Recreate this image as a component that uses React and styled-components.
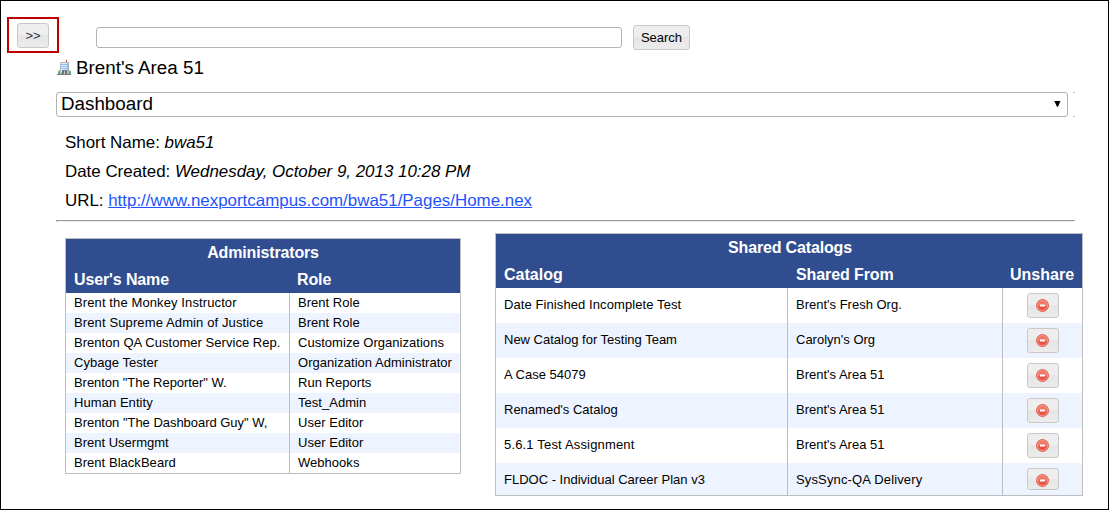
import React from "react";
import styled, { createGlobalStyle } from "styled-components";

const Global = createGlobalStyle`
  * { box-sizing: border-box; }
  body { margin: 0; background: #fff; color: #000; font-family: "Liberation Sans", Arial, sans-serif; }
`;

const Page = styled.main`
  width: 1109px;
  height: 510px;
  border: 1px solid #000;
  overflow: hidden;
  display: flex;
  flex-direction: column;
`;

const TopBar = styled.header`
  display: flex;
  align-items: flex-start;
  padding: 16px 0 0 6px;
  height: 52px;
  flex: none;
`;

const Highlight = styled.div`
  width: 52px;
  height: 36px;
  border: 2px solid #c00000;
  padding: 4px 8px;
  margin-right: 37px;
`;

const Button = styled.button`
  display: flex;
  align-items: center;
  justify-content: center;
  width: ${(p) => p.$width || 32}px;
  height: ${(p) => p.$height || 25}px;
  margin: ${(p) => p.$margin || "0"};
  padding: ${(p) => p.$padding || "0"};
  border: 1px solid #c8c8c8;
  border-radius: 3px;
  background: linear-gradient(#eeeeee 0 48%, #e5e5e5 50%, #ececec 100%);
  color: ${(p) => p.$color || "#000"};
  font: 13px "Liberation Sans", Arial, sans-serif;
`;

const SearchInput = styled.input`
  width: 526px;
  height: 21px;
  margin: 10px 11px 0 0;
  border: 1px solid #b4b4b4;
  border-radius: 3px;
  outline: none;
`;

const Title = styled.h1`
  display: flex;
  align-items: center;
  gap: 4px;
  height: 28px;
  margin: 1px 0 0 56px;
  font-size: 18.8px;
  font-weight: 400;
  line-height: 28px;
`;

const SelectRow = styled.div`
  display: flex;
  gap: 5px;
  height: 25px;
  margin: 10px 0 0 55px;
  flex: none;
`;

const Select = styled.div`
  display: flex;
  align-items: center;
  justify-content: space-between;
  width: 1012px;
  padding: 0 6px 1px 4px;
  border: 1px solid #b4b4b4;
  border-radius: 3px;
  font-size: 18.8px;
`;

const SelectEdge = styled.div`
  width: 2px;
  border: 1px solid #c4c4c4;
  border-width: 1px 0;
`;

const Details = styled.section`
  margin: 11px 0 0 64px;
  font-size: 16.92px;
  line-height: 29px;
  height: 87px;
  flex: none;
`;

const Detail = styled.div`
  white-space: nowrap;
`;

const Link = styled.a`
  color: #1e54fa;
  text-decoration: underline;
`;

const Divider = styled.hr`
  width: 1019px;
  height: 2px;
  margin: 5px 0 0 55px;
  border: 1px solid #999;
  border-right-color: #eee;
  border-bottom-color: #eee;
  flex: none;
`;

const Panels = styled.section`
  display: flex;
  align-items: flex-start;
  gap: 34px;
  padding: 11px 0 0 64px;
`;

const Table = styled.div`
  width: ${(p) => p.$width}px;
  margin-top: ${(p) => p.$top || 0}px;
  border: 1px solid #bcbec0;
  flex: none;
`;

const TableHead = styled.div`
  height: 54px;
  background: #304d8f;
  color: #fff;
  font-size: 16px;
  font-weight: 700;
  line-height: 27px;
`;

const Caption = styled.div`
  text-align: center;
  padding-left: ${(p) => p.$left || 0}px;
  letter-spacing: -0.15px;
`;

const Row = styled.div`
  display: grid;
  grid-template-columns: ${(p) => p.$columns};
  grid-template-rows: 100%;
  height: ${(p) => p.$height}px;
  line-height: ${(p) => p.$line || p.$height}px;
  background: ${(p) => (p.$alt ? "#edf4ff" : "transparent")};
`;

const Cell = styled.div`
  padding-left: 8px;
  font-size: 13px;
  letter-spacing: ${(p) => p.$spacing || 0}px;
  white-space: nowrap;
  & + & { border-left: 1px solid #bcbec0; }
`;

const HeadCell = styled.div`
  padding-left: ${(p) => p.$left ?? 8}px;
  letter-spacing: ${(p) => p.$spacing || 0}px;
`;

const ButtonCell = styled(Cell)`
  padding: 5px 0 0 24px;
  border-left: 1px solid #bcbec0;
`;

const BuildingIcon = () => (
  <svg width="15" height="16" viewBox="0 0 15 16">
    <path d="M1 14v-2l1-2 2 2v2zM14 14v-2l-1-2-2 2v2z" fill="#5fb35f" />
    <path d="M9 0h1v3H9z" fill="#d43535" />
    <path d="M3 3l1-1h7l1 1v11H3z" fill="#a9b6c8" />
    <path d="M4 3h6v9H4z" fill="#e2efff" />
    <path d="M4 4.5h6M4 6.5h6M4 8.5h6" stroke="#8fbafa" />
    <path d="M5 14v-4h5v4z" fill="#70757c" />
    <path d="M7 11h1v3H7z" fill="#c8cdd2" />
    <path d="M0 14h14v1H0z" fill="#777" />
  </svg>
);

const RemoveIcon = () => (
  <svg width="13" height="13" viewBox="0 0 13 13">
    <circle cx="6.5" cy="6.5" r="6" fill="#f07766" stroke="#dc6556" />
    <path d="M2 7h9a4.5 4.5 0 0 1-9 0" fill="#ea5143" />
    <circle cx="6.5" cy="6.5" r="5" fill="none" stroke="#f8a08f" strokeWidth=".8" />
    <path d="M4 5.5h5v2H4z" fill="#fff" />
  </svg>
);

const ArrowIcon = () => (
  <svg width="7" height="6" viewBox="0 0 7 6">
    <path d="M.3 0h6.2L4 5.8H3z" fill="#000" />
  </svg>
);

const administrators = [
  ["Brent the Monkey Instructor", "Brent Role", 0.11],
  ["Brent Supreme Admin of Justice", "Brent Role", 0.12],
  ["Brenton QA Customer Service Rep.", "Customize Organizations", 0.04],
  ["Cybage Tester", "Organization Administrator", 0.04],
  ['Brenton "The Reporter" W.', "Run Reports", -0.05],
  ["Human Entity", "Test_Admin", 0.06],
  ['Brenton "The Dashboard Guy" W,', "User Editor", -0.03],
  ["Brent Usermgmt", "User Editor", 0],
  ["Brent BlackBeard", "Webhooks", 0.04],
];

const catalogs = [
  ["Date Finished Incomplete Test", "Brent's Fresh Org.", 0.09],
  ["New Catalog for Testing Team", "Carolyn's Org", 0],
  ["A Case 54079", "Brent's Area 51", 0],
  ["Renamed's Catalog", "Brent's Area 51", 0],
  ["5.6.1 Test Assignment", "Brent's Area 51", 0.17],
  ["FLDOC - Individual Career Plan v3", "SysSync-QA Delivery", 0],
];

const adminColumns = "223px 1fr";
const catalogColumns = "291px 215px 1fr";

export default function App() {
  return (
    <>
      <Global />
      <Page>
        <TopBar>
          <Highlight><Button $color="#333">&gt;&gt;</Button></Highlight>
          <SearchInput aria-label="Search" />
          <Button $width={57} $margin="8px 0 0">Search</Button>
        </TopBar>
        <Title><BuildingIcon />Brent's Area 51</Title>
        <SelectRow><Select>Dashboard<ArrowIcon /></Select><SelectEdge /></SelectRow>
        <Details>
          <Detail>Short Name: <em>bwa51</em></Detail>
          <Detail>Date Created: <em>Wednesday, October 9, 2013 10:28 PM</em></Detail>
          <Detail>URL: <Link href="#">http://www.nexportcampus.com/bwa51/Pages/Home.nex</Link></Detail>
        </Details>
        <Divider />
        <Panels>
          <Table $width={396} $top={5}>
            <TableHead>
              <Caption>Administrators</Caption>
              <Row $columns={adminColumns} $height={27}>
                <HeadCell $spacing={-0.12}>User's Name</HeadCell><HeadCell $spacing={-0.12}>Role</HeadCell>
              </Row>
            </TableHead>
            {administrators.map(([name, role, spacing], i) => (
              <Row key={name} $columns={adminColumns} $height={20} $alt={i % 2 === 1}>
                <Cell $spacing={spacing}>{name}</Cell><Cell $spacing={0.03}>{role}</Cell>
              </Row>
            ))}
          </Table>
          <Table $width={588}>
            <TableHead>
              <Caption $left={2}>Shared Catalogs</Caption>
              <Row $columns={catalogColumns} $height={27}>
                <HeadCell>Catalog</HeadCell><HeadCell $left={9} $spacing={-0.1}>Shared From</HeadCell><HeadCell>Unshare</HeadCell>
              </Row>
            </TableHead>
            {catalogs.map(([name, source, spacing], i) => {
              const last = i === catalogs.length - 1;
              return (
                <Row key={name} $columns={catalogColumns} $height={last ? 32 : 35} $line={34} $alt={i % 2 === 1}>
                  <Cell $spacing={spacing}>{name}</Cell>
                  <Cell $spacing={last ? 0.15 : 0}>{source}</Cell>
                  <ButtonCell>
                    <Button $height={last ? 22 : 25} $padding={last ? "3px 1px 0 0" : "0 1px 0 0"} aria-label="Unshare">
                      <RemoveIcon />
                    </Button>
                  </ButtonCell>
                </Row>
              );
            })}
          </Table>
        </Panels>
      </Page>
    </>
  );
}
